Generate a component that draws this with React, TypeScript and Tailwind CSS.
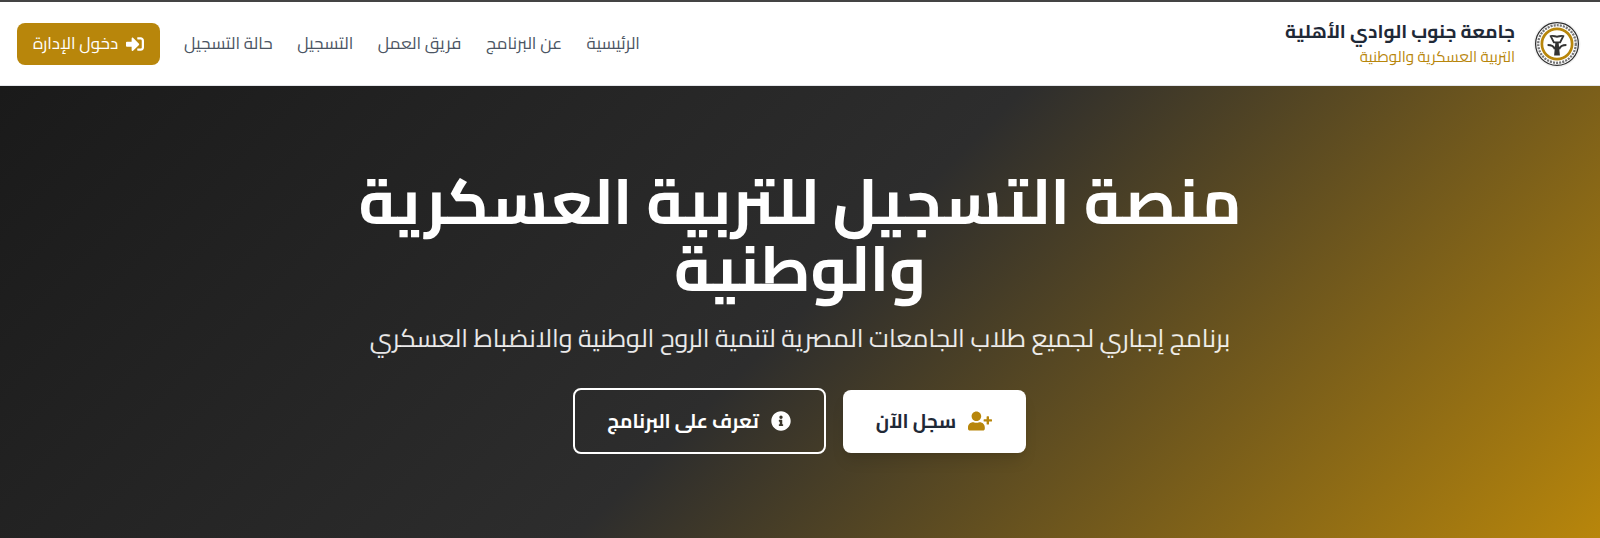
import { FaSignInAlt, FaUserPlus, FaInfoCircle } from "react-icons/fa";

const navLinks = ["الرئيسية", "عن البرنامج", "فريق العمل", "التسجيل", "حالة التسجيل"];

function Logo() {
  return (
    <svg width="48" height="48" viewBox="0 0 46 46" className="shrink-0">
      <circle cx="23" cy="23" r="22.5" fill="#f2f2f2" />
      <circle cx="23" cy="23" r="20.5" fill="#fff" stroke="#2f2f2f" strokeWidth="1.2" />
      <circle cx="23" cy="23" r="18" fill="none" stroke="#777" strokeWidth="2.2" strokeDasharray="2 1" />
      <circle cx="23" cy="23" r="14.5" fill="#fff" stroke="#b8860b" strokeWidth="2.6" />
      <path d="M17 15.5c2-1 4 .5 6 .5s4-1.500 6-.5l-3 6h-6z" fill="none" stroke="#333" strokeWidth="1.8" />
      <path d="M21.500 21h3l1.300 13h-5.600z" fill="#333" />
      <path d="M14 24c3 0 6 1 7 4M32 24c-3 0-6 1-7 4" fill="none" stroke="#333" strokeWidth="2" />
    </svg>
  );
}

export default function App() {
  return (
    <div dir="rtl" className="h-[538px] overflow-hidden bg-white font-['Cairo','DejaVu_Sans',sans-serif]">
      <nav className="h-[86px] border-t-2 border-t-[#444] bg-white flex items-center justify-between pr-[19px] pl-[17px] border-b border-b-[#e5e7eb]">
        <div className="flex items-center gap-[18px]">
          <Logo />
          <div className="flex flex-col items-start">
            <span className="text-[19px] leading-[27px] font-bold text-[#1f2937]">جامعة جنوب الوادي الأهلية</span>
            <span className="text-[15.2px] leading-[24px] text-[#b8860b]">التربية العسكرية والوطنية</span>
          </div>
        </div>
        <div className="flex items-center gap-[24px]">
          <ul className="flex items-center gap-[24.5px]">
            {navLinks.map((l) => (
              <li key={l} className="text-[17px] text-[#4b5563]">{l}</li>
            ))}
          </ul>
          <button className="w-[143px] h-[42px] rounded-lg bg-[#b8860b] text-white text-[17px] flex items-center justify-center gap-2">
            <FaSignInAlt className="text-[18px]" />
            دخول الإدارة
          </button>
        </div>
      </nav>
      <section className="h-[452px] bg-[linear-gradient(135deg,#1a1a1a_0%,#2d2d2d_50%,#b8860b_100%)] flex flex-col items-center pt-[82px]">
        <h1 className="w-[1000px] text-center text-[63px] leading-[67px] font-bold text-white">
          منصة التسجيل للتربية العسكرية والوطنية
        </h1>
        <p className="mt-[18px] text-[25.2px] leading-[36px] text-white/90">
          برنامج إجباري لجميع طلاب الجامعات المصرية لتنمية الروح الوطنية والانضباط العسكري
        </p>
        <div className="mt-[32px] mr-[2px] flex items-center gap-[17px]">
          <button className="w-[183px] h-[63px] rounded-lg bg-white text-[#1f2937] text-[19.2px] font-bold flex items-center justify-center gap-3 shadow-lg">
            <FaUserPlus className="text-[24px] text-[#b8860b]" />
            سجل الآن
          </button>
          <button className="w-[253px] h-[66px] rounded-lg border-2 border-white text-white text-[19.2px] font-bold flex items-center justify-center gap-3">
            <FaInfoCircle className="text-[20px]" />
            تعرف على البرنامج
          </button>
        </div>
      </section>
    </div>
  );
}
